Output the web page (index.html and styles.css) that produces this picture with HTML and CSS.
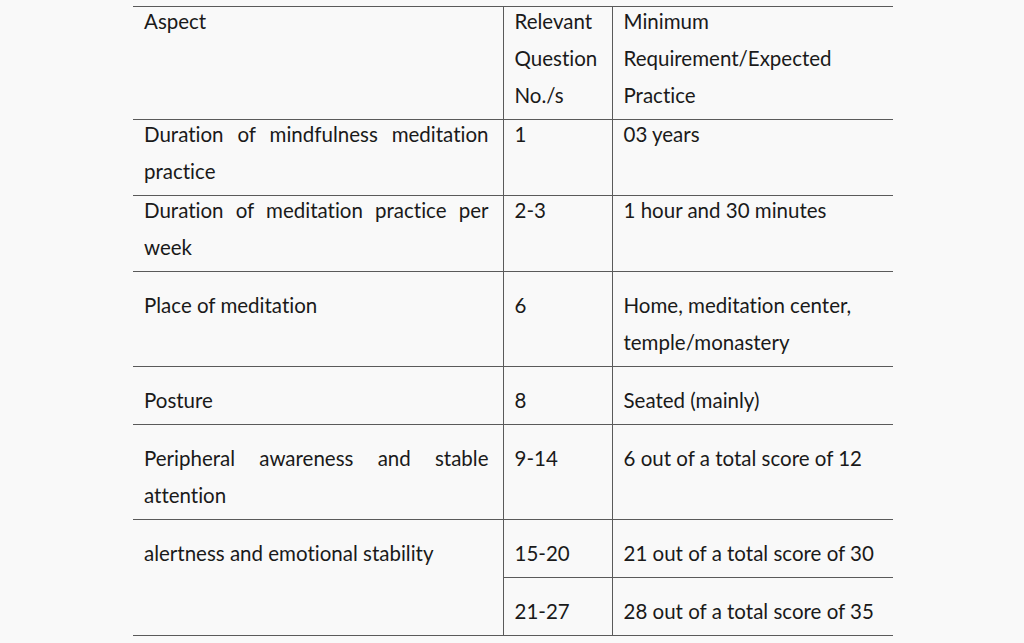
FILE: index.html
```html
<!DOCTYPE html>
<html>
<head>
<meta charset="utf-8">
<link rel="stylesheet" href="styles.css">
</head>
<body>
<table class="req">
  <colgroup>
    <col class="c1"><col class="c2"><col class="c3">
  </colgroup>
  <tr class="tight">
    <td><div class="t">Aspect</div></td>
    <td><div class="t">Relevant Question No./s</div></td>
    <td><div class="t">Minimum Requirement/Expected Practice</div></td>
  </tr>
  <tr class="tight">
    <td class="just"><div class="t">Duration of mindfulness meditation practice</div></td>
    <td><div class="t">1</div></td>
    <td><div class="t">03 years</div></td>
  </tr>
  <tr class="tight">
    <td class="just"><div class="t">Duration of meditation practice per week</div></td>
    <td><div class="t">2-3</div></td>
    <td><div class="t">1 hour and 30 minutes</div></td>
  </tr>
  <tr class="loose">
    <td><div class="t">Place of meditation</div></td>
    <td><div class="t">6</div></td>
    <td><div class="t">Home, meditation center, temple/monastery</div></td>
  </tr>
  <tr class="loose">
    <td><div class="t">Posture</div></td>
    <td><div class="t">8</div></td>
    <td><div class="t">Seated (mainly)</div></td>
  </tr>
  <tr class="loose">
    <td class="just"><div class="t">Peripheral awareness and stable attention</div></td>
    <td><div class="t">9-14</div></td>
    <td><div class="t">6 out of a total score of 12</div></td>
  </tr>
  <tr class="loose">
    <td rowspan="2" class="span"><div class="t">alertness and emotional stability</div></td>
    <td><div class="t">15-20</div></td>
    <td><div class="t">21 out of a total score of 30</div></td>
  </tr>
  <tr class="loose">
    <td><div class="t">21-27</div></td>
    <td><div class="t">28 out of a total score of 35</div></td>
  </tr>
</table>
</body>
</html>
```

FILE: styles.css
```css
html, body {
  margin: 0;
  padding: 0;
  background: #f9f9f9;
}
body {
  padding: 6px 0 0 133px;
  font-family: Lato, "Open Sans", sans-serif;
  font-size: 20.5px;
  color: #1a1a1a;
  font-variant-ligatures: none;
}
.req {
  border-collapse: collapse;
  table-layout: fixed;
  width: 760px;
}
.c1 { width: 370px; }
.c2 { width: 109px; }
.c3 { width: 281px; }
.req td {
  border: 1.5px solid #5a5a5a;
  vertical-align: top;
  line-height: 37px;
  padding: 0 14px 1px 11px;
  text-align: left;
}
.req tr td:first-child { border-left: none; }
.req tr td:last-child { border-right: none; }
.req td.span { border-right: 1.5px solid #5a5a5a; }
.req .just { text-align: justify; }
.req .t { margin: -4px 0 4px; }
.loose td { padding-top: 19px; padding-bottom: 1px; }
```
